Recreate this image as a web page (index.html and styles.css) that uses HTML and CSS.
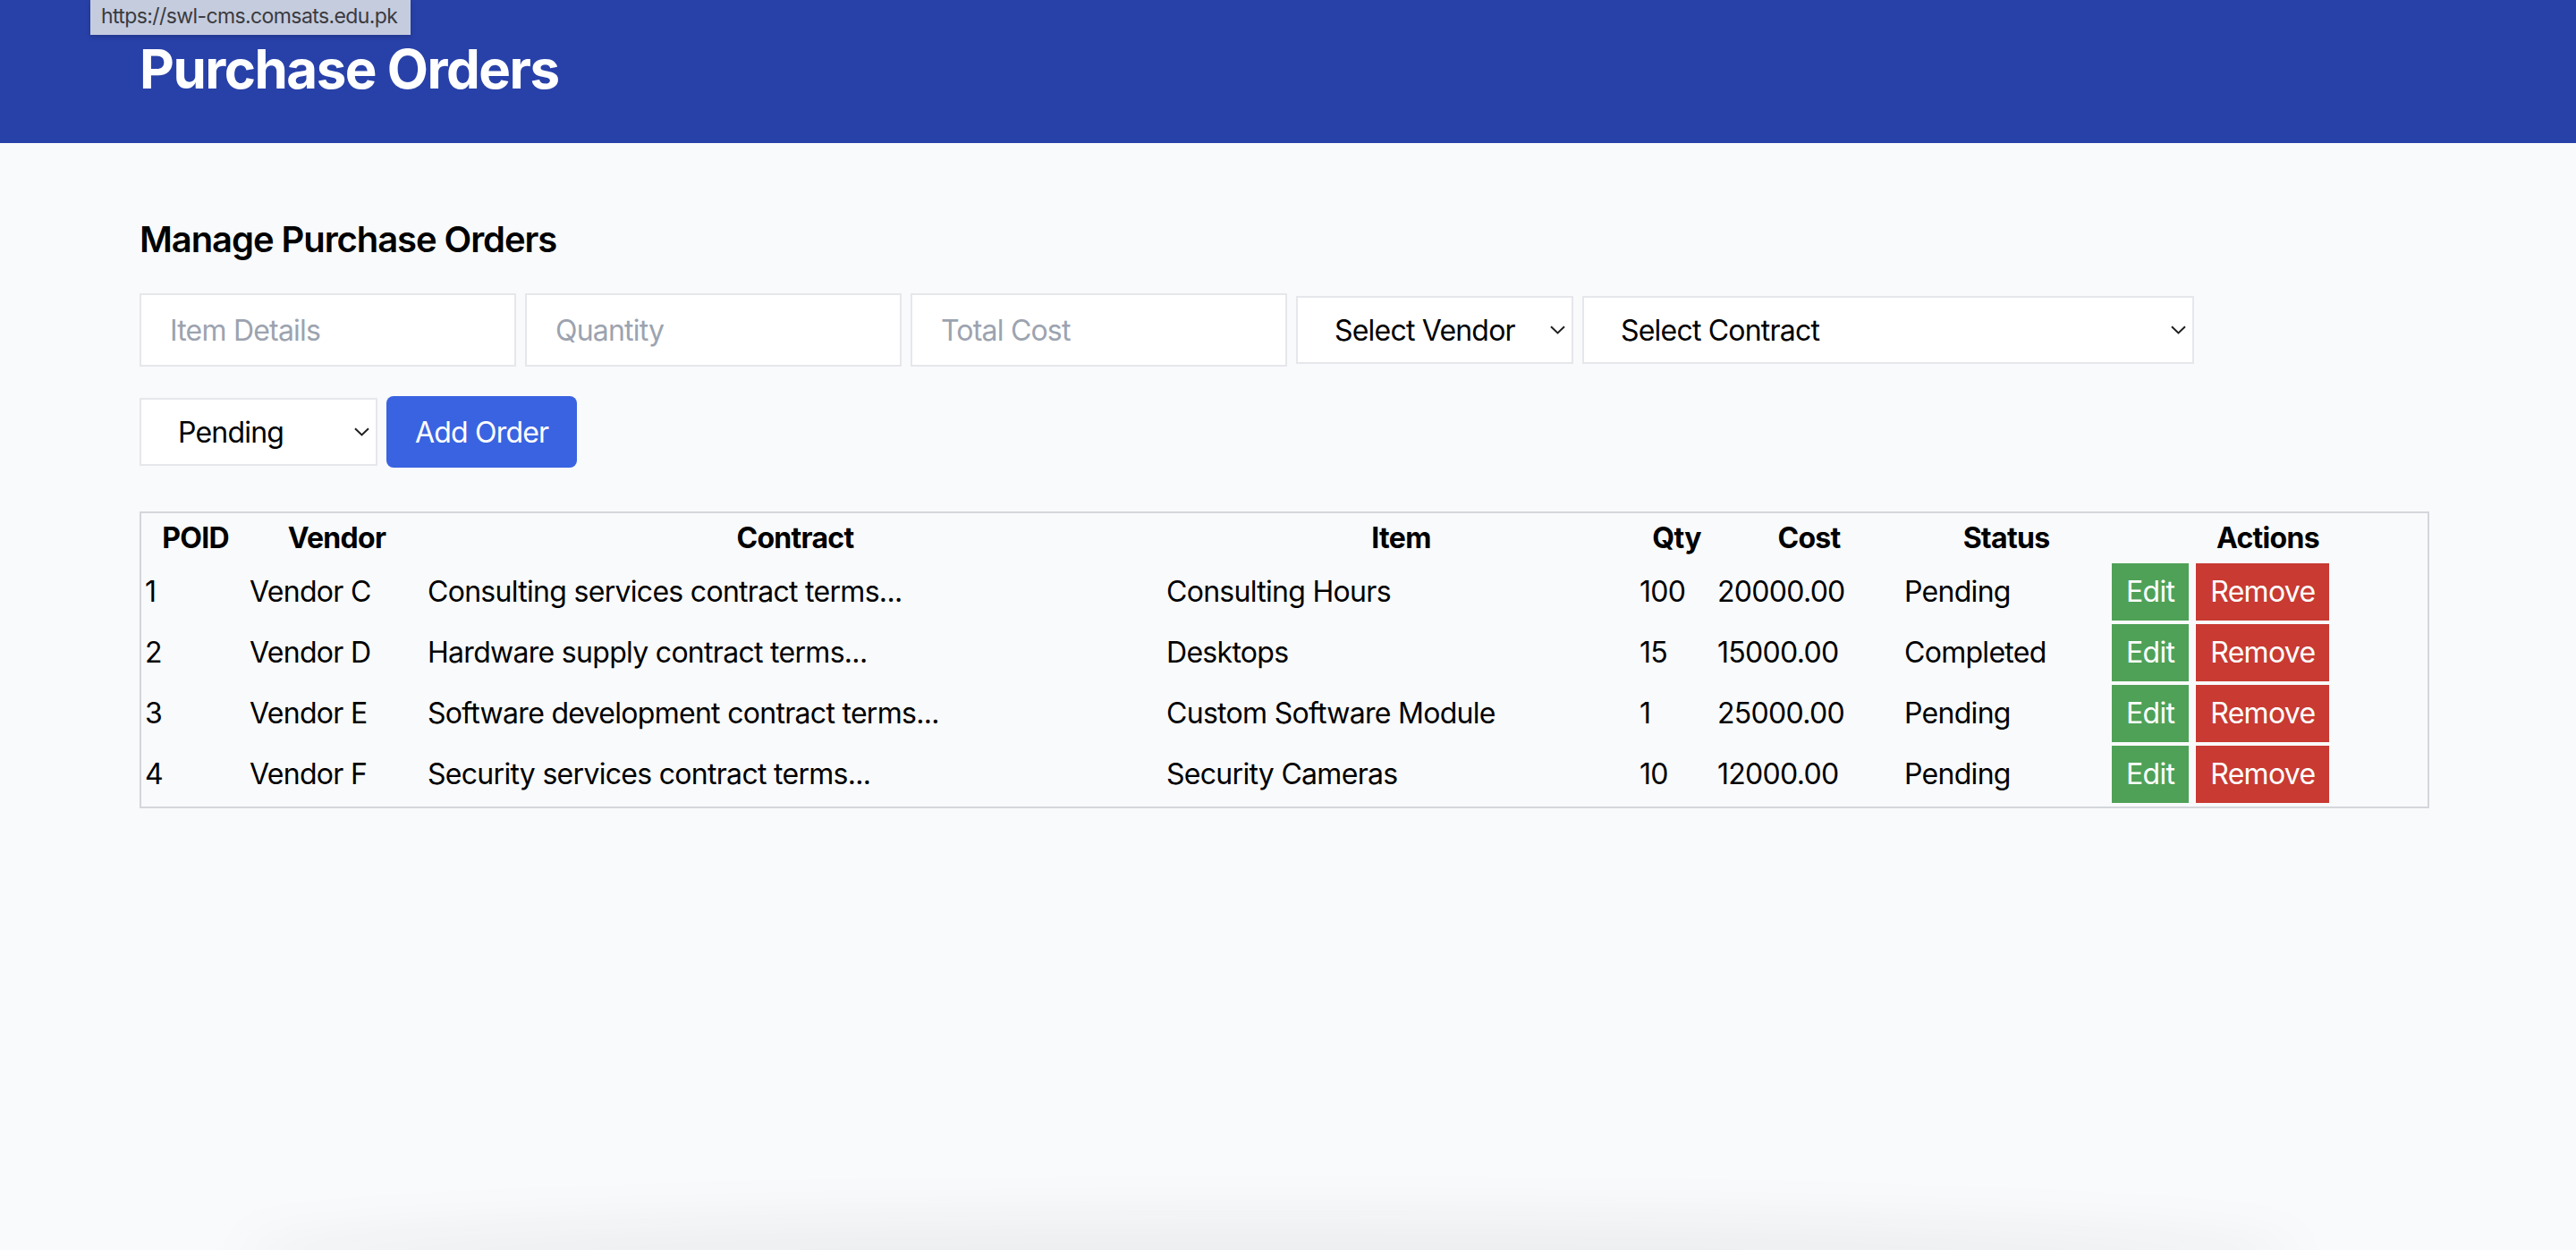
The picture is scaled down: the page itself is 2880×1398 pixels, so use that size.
FILE: index.html
```html
<!DOCTYPE html>
<html lang="en">
<head>
<meta charset="utf-8">
<title>Purchase Orders</title>
<link rel="stylesheet" href="styles.css">
</head>
<body>
<div class="status-tip">https://swl-cms.comsats.edu.pk</div>
<header class="topbar">
  <h1 class="topbar-title">Purchase Orders</h1>
</header>
<main class="content">
  <h2 class="section-title">Manage Purchase Orders</h2>
  <form class="order-form">
    <input class="field" type="text" placeholder="Item Details">
    <input class="field" type="text" placeholder="Quantity">
    <input class="field" type="text" placeholder="Total Cost">
    <span class="select-wrap select-vendor">
      <select class="select"><option>Select Vendor</option></select>
      <svg class="chevron" width="17" height="10" viewBox="0 0 17 10"><path d="M1 1.2 L8.5 8.4 L16 1.2" fill="none" stroke="#1f1f1f" stroke-width="2"/></svg>
    </span>
    <span class="select-wrap select-contract">
      <select class="select"><option>Select Contract</option></select>
      <svg class="chevron" width="17" height="10" viewBox="0 0 17 10"><path d="M1 1.2 L8.5 8.4 L16 1.2" fill="none" stroke="#1f1f1f" stroke-width="2"/></svg>
    </span>
    <span class="select-wrap select-status">
      <select class="select"><option>Pending</option><option>Completed</option></select>
      <svg class="chevron" width="17" height="10" viewBox="0 0 17 10"><path d="M1 1.2 L8.5 8.4 L16 1.2" fill="none" stroke="#1f1f1f" stroke-width="2"/></svg>
    </span>
    <button class="btn-add" type="button">Add Order</button>
  </form>

  <table class="orders">
    <colgroup>
      <col class="c-id"><col class="c-vendor"><col class="c-contract"><col class="c-item">
      <col class="c-qty"><col class="c-cost"><col class="c-status"><col class="c-actions">
    </colgroup>
    <thead>
      <tr><th>POID</th><th>Vendor</th><th>Contract</th><th>Item</th><th>Qty</th><th>Cost</th><th>Status</th><th>Actions</th></tr>
    </thead>
    <tbody>
      <tr><td>1</td><td>Vendor C</td><td>Consulting services contract terms...</td><td>Consulting Hours</td><td>100</td><td>20000.00</td><td>Pending</td><td><button class="btn btn-edit" type="button">Edit</button><button class="btn btn-remove" type="button">Remove</button></td></tr>
      <tr><td>2</td><td>Vendor D</td><td>Hardware supply contract terms...</td><td>Desktops</td><td>15</td><td>15000.00</td><td>Completed</td><td><button class="btn btn-edit" type="button">Edit</button><button class="btn btn-remove" type="button">Remove</button></td></tr>
      <tr><td>3</td><td>Vendor E</td><td>Software development contract terms...</td><td>Custom Software Module</td><td>1</td><td>25000.00</td><td>Pending</td><td><button class="btn btn-edit" type="button">Edit</button><button class="btn btn-remove" type="button">Remove</button></td></tr>
      <tr><td>4</td><td>Vendor F</td><td>Security services contract terms...</td><td>Security Cameras</td><td>10</td><td>12000.00</td><td>Pending</td><td><button class="btn btn-edit" type="button">Edit</button><button class="btn btn-remove" type="button">Remove</button></td></tr>
    </tbody>
  </table>
</main>
<div class="dock-shadow"></div>
</body>
</html>
```

FILE: styles.css
```css
html {
  background: #f9fafb;
}
body {
  margin: 0;
  min-height: 1398px;
  background: #f9fafb;
  font-family: Inter, "Noto Sans", "Liberation Sans", sans-serif;
  color: #000;
  position: relative;
  overflow: hidden;
}

.status-tip {
  position: absolute;
  left: 101px;
  top: 0;
  height: 39px;
  box-sizing: border-box;
  padding: 0 15px 0 12px;
  white-space: nowrap;
  background: #c5ccde;
  color: #3a3b40;
  font-size: 23px;
  letter-spacing: -0.6px;
  line-height: 36px;
  box-shadow: 0 2px 6px rgba(0, 0, 0, 0.18);
  z-index: 5;
}

.topbar {
  background: #2841a9;
  height: 160px;
  box-sizing: border-box;
  padding: 41px 0 0 156px;
}
.topbar-title {
  margin: 0;
  color: #fff;
  font-size: 60px;
  line-height: 72px;
  font-weight: 700;
  letter-spacing: -0.025em;
}

.content {
  width: 2560px;
  padding: 80px 0 0 156px;
}
.section-title {
  margin: 0 0 32px;
  font-size: 40px;
  line-height: 56px;
  font-weight: 600;
  letter-spacing: -0.027em;
}

.order-form {
  display: flex;
  flex-wrap: wrap;
  align-items: center;
  column-gap: 10px;
  row-gap: 33px;
  margin-bottom: 49px;
}
.field {
  width: 421px;
  height: 82px;
  box-sizing: border-box;
  border: 2px solid #e5e7eb;
  background: #fff;
  padding: 0 32px;
  font-family: inherit;
  font-size: 32px;
  letter-spacing: -0.025em;
  color: #000;
  outline: none;
  margin: 0;
}
.field::placeholder {
  color: #9ca3af;
}
.select-wrap {
  position: relative;
  display: block;
  height: 76px;
}
.select {
  appearance: none;
  -webkit-appearance: none;
  width: 100%;
  height: 76px;
  box-sizing: border-box;
  border: 2px solid #e5e7eb;
  background: #fff;
  padding: 0 0 0 41px;
  font-family: inherit;
  font-size: 32px;
  letter-spacing: -0.025em;
  color: #000;
  margin: 0;
  border-radius: 0;
  outline: none;
}
.select-vendor { width: 310px; }
.select-contract { width: 684px; }
.select-status { width: 266px; }
.chevron {
  position: absolute;
  right: 9px;
  top: 33px;
  pointer-events: none;
}

.btn-add {
  height: 80px;
  padding: 0 32px;
  border: none;
  border-radius: 8px;
  background: #3a63e1;
  color: #fff;
  font-family: inherit;
  font-size: 32px;
  letter-spacing: -0.025em;
  margin: 0;
}

.orders {
  width: 2560px;
  table-layout: fixed;
  border-collapse: separate;
  border-spacing: 4px;
  border: 2px solid #d4d6db;
  font-size: 32px;
  line-height: 48px;
  letter-spacing: -0.022em;
}
.c-id { width: 113px; }
.c-vendor { width: 195px; }
.c-contract { width: 822px; }
.c-item { width: 525px; }
.c-qty { width: 83px; }
.c-cost { width: 205px; }
.c-status { width: 228px; }
.c-actions { width: 349px; }
.orders th {
  padding: 0;
  font-weight: 700;
  text-align: center;
}
.orders td {
  padding: 0;
  text-align: left;
  vertical-align: middle;
  white-space: nowrap;
}
.btn {
  display: inline-block;
  vertical-align: middle;
  padding: 8px 16px;
  border: none;
  color: #fff;
  font-family: inherit;
  font-size: 32px;
  line-height: 48px;
  letter-spacing: -0.022em;
  margin: 0 8px 0 0;
  border-radius: 0;
}
.btn-edit { background: #4fa157; }
.btn-remove { background: #c83a32; }

.dock-shadow {
  position: absolute;
  left: 270px;
  right: 310px;
  bottom: -50px;
  height: 90px;
  background: rgba(20, 20, 40, 0.05);
  border-radius: 50%;
  filter: blur(26px);
  pointer-events: none;
}
```
